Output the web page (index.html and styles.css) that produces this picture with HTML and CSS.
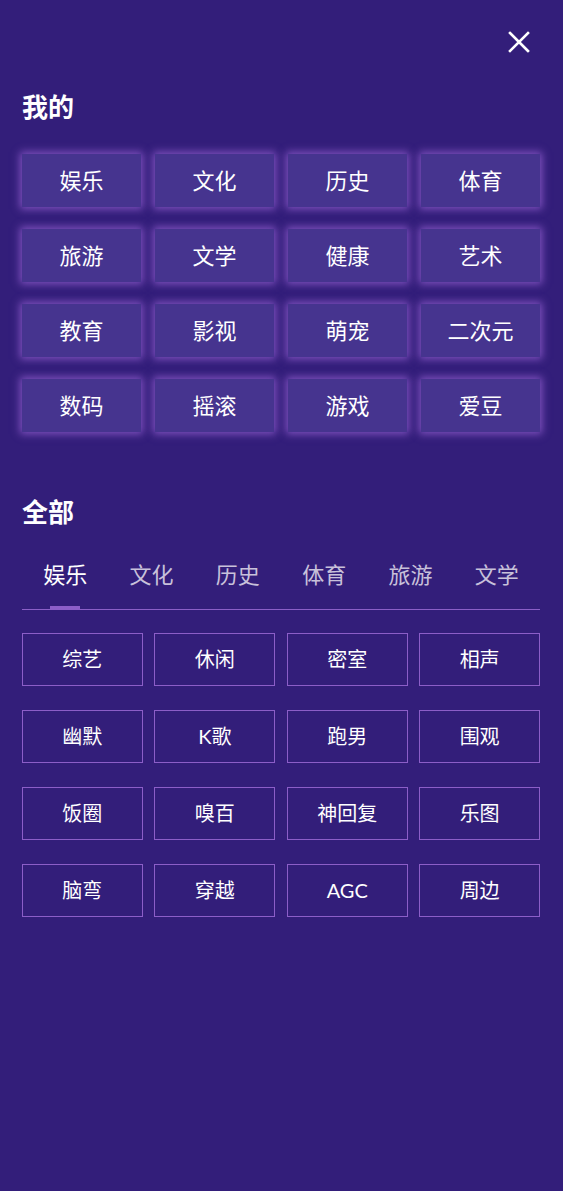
FILE: index.html
```html
<!DOCTYPE html>
<html lang="zh">
<head>
<meta charset="utf-8">
<link rel="stylesheet" href="styles.css">
</head>
<body>
<div class="page">
  <div class="top">
    <svg class="close" width="22" height="22" viewBox="0 0 22 22">
      <path d="M2 2 L20 20 M20 2 L2 20" stroke="#fff" stroke-width="2.6" stroke-linecap="square" fill="none"/>
    </svg>
  </div>
  <h2 class="title title-mine">我的</h2>
  <div class="mine-grid">
    <div class="mine-card">娱乐</div>
    <div class="mine-card">文化</div>
    <div class="mine-card">历史</div>
    <div class="mine-card">体育</div>
    <div class="mine-card">旅游</div>
    <div class="mine-card">文学</div>
    <div class="mine-card">健康</div>
    <div class="mine-card">艺术</div>
    <div class="mine-card">教育</div>
    <div class="mine-card">影视</div>
    <div class="mine-card">萌宠</div>
    <div class="mine-card">二次元</div>
    <div class="mine-card">数码</div>
    <div class="mine-card">摇滚</div>
    <div class="mine-card">游戏</div>
    <div class="mine-card">爱豆</div>
  </div>
  <h2 class="title title-all">全部</h2>
  <div class="tabs">
    <div class="tab active"><span class="tab-text">娱乐</span><span class="tab-bar"></span></div>
    <div class="tab"><span class="tab-text">文化</span><span class="tab-bar"></span></div>
    <div class="tab"><span class="tab-text">历史</span><span class="tab-bar"></span></div>
    <div class="tab"><span class="tab-text">体育</span><span class="tab-bar"></span></div>
    <div class="tab"><span class="tab-text">旅游</span><span class="tab-bar"></span></div>
    <div class="tab"><span class="tab-text">文学</span><span class="tab-bar"></span></div>
  </div>
  <div class="all-grid">
    <div class="all-card">综艺</div>
    <div class="all-card">休闲</div>
    <div class="all-card">密室</div>
    <div class="all-card">相声</div>
    <div class="all-card">幽默</div>
    <div class="all-card">K歌</div>
    <div class="all-card">跑男</div>
    <div class="all-card">围观</div>
    <div class="all-card">饭圈</div>
    <div class="all-card">嗅百</div>
    <div class="all-card">神回复</div>
    <div class="all-card">乐图</div>
    <div class="all-card">脑弯</div>
    <div class="all-card">穿越</div>
    <div class="all-card">AGC</div>
    <div class="all-card">周边</div>
  </div>
</div>
</body>
</html>
```

FILE: styles.css
```css
html, body {
  margin: 0;
  padding: 0;
  background: #331e7a;
}
body {
  font-family: Lato, "Noto Sans CJK SC", sans-serif;
  color: #fff;
  min-height: 1191px;
}
.page {
  padding: 0 23px 0 22px;
}
.top {
  display: flex;
  justify-content: flex-end;
  padding: 31px 10px 0 0;
}
.close {
  display: block;
}
.title {
  margin: 0;
  font-size: 26px;
  line-height: 26px;
  font-weight: 700;
  color: #fff;
}
.title-mine {
  margin-top: 41px;
}
.mine-grid {
  display: grid;
  grid-template-columns: repeat(4, 1fr);
  column-gap: 14px;
  row-gap: 22px;
  margin-top: 34px;
}
.mine-card {
  height: 53px;
  line-height: 53px;
  text-align: center;
  font-size: 22px;
  background: #46348f;
  box-shadow: 0 0 8px 2px rgba(155, 100, 215, 0.75);
}
.title-all {
  margin-top: 67px;
}
.tabs {
  display: flex;
  margin-top: 35px;
  border-bottom: 1px solid #8b5fc7;
}
.tab {
  flex: 1;
  display: flex;
  flex-direction: column;
  align-items: center;
}
.tab-text {
  font-size: 22px;
  line-height: 30px;
  color: #c8c1da;
}
.tab-bar {
  width: 30px;
  height: 3px;
  margin-top: 16px;
}
.tab.active .tab-text {
  color: #fff;
}
.tab.active .tab-bar {
  background: #8c5ec8;
}
.all-grid {
  display: grid;
  grid-template-columns: repeat(4, 1fr);
  column-gap: 11.7px;
  row-gap: 24px;
  margin-top: 23px;
}
.all-card {
  box-sizing: border-box;
  height: 53px;
  line-height: 51px;
  text-align: center;
  font-size: 20px;
  border: 1px solid #8c5ec8;
}
```
